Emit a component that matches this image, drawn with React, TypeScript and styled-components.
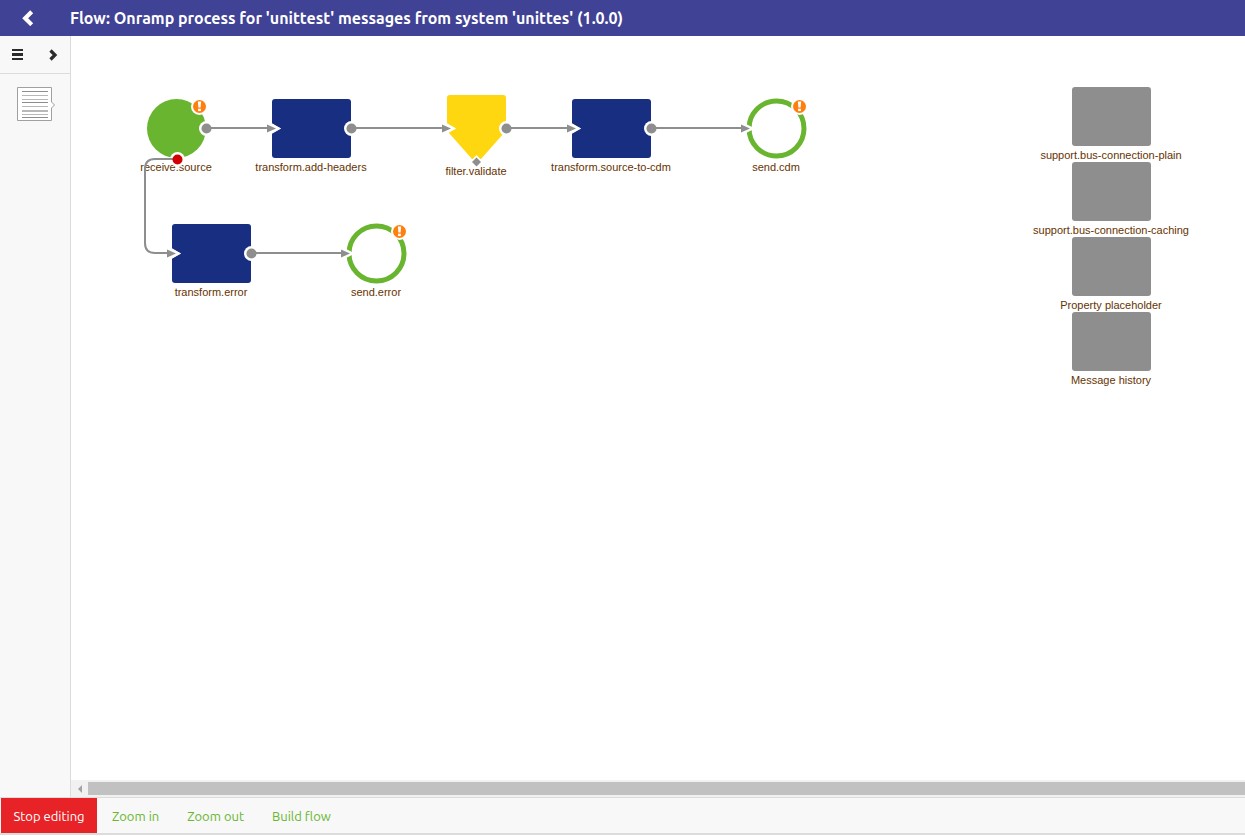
import React from 'react';
import styled, { createGlobalStyle } from 'styled-components';

const Global = createGlobalStyle`
  * { box-sizing: border-box; }
  body { margin: 0; background: #fff; font-family: Ubuntu, "Noto Sans", sans-serif; }
  button { border: 0; padding: 0; margin: 0; background: none; font: inherit; cursor: pointer; }
`;

const Page = styled.div`
  display: flex;
  flex-direction: column;
  height: 100vh;
  min-height: 480px;
  padding-bottom: 1px;
`;

const Header = styled.header`
  display: flex;
  align-items: center;
  flex: none;
  height: 36px;
  background: #404295;
  color: #fff;
`;

const BackButton = styled.button`
  display: flex;
  align-items: center;
  justify-content: center;
  width: 56px;
  height: 36px;
`;

const Title = styled.h1`
  margin: 0 0 0 14px;
  font-size: 16px;
  line-height: 20px;
  font-weight: 700;
  white-space: nowrap;
`;

const Body = styled.div`
  display: flex;
  flex: 1;
  min-height: 0;
`;

const Sidebar = styled.aside`
  flex: none;
  width: 71px;
  background: #f8f8f8;
  border-right: 1px solid #dcdcdc;
`;

const SideTools = styled.div`
  display: flex;
  height: 38px;
  border-bottom: 1px solid #dcdcdc;
`;

const SideButton = styled.button`
  display: flex;
  align-items: center;
  justify-content: center;
  width: 35px;
  height: 37px;
`;

const PaletteButton = styled.button`
  display: flex;
  padding: 12px 16px;
`;

const Main = styled.main`
  display: flex;
  flex-direction: column;
  flex: 1;
  min-width: 0;
`;

const Canvas = styled.div`
  position: relative;
  flex: 1;
  min-height: 0;
  overflow: hidden;
`;

const Wires = styled.svg`
  position: absolute;
  top: 0;
  left: 0;
  pointer-events: none;
`;

const Node = styled.div<{ $x: number; $y: number; $w: number }>`
  position: absolute;
  left: ${p => p.$x}px;
  top: ${p => p.$y}px;
  width: ${p => p.$w}px;
  display: flex;
  flex-direction: column;
  align-items: center;
`;

const Shape = styled.svg`
  display: block;
  flex: none;
  overflow: visible;
`;

const NodeLabel = styled.span`
  margin-top: 2px;
  font: 11px/13px "Liberation Sans", Arial, sans-serif;
  color: #663300;
  white-space: nowrap;
`;

const ScrollTrack = styled.div`
  display: flex;
  align-items: center;
  flex: none;
  height: 17px;
  background: #f1f1f1;
`;

const ScrollArrow = styled.button`
  display: flex;
  align-items: center;
  justify-content: center;
  width: 17px;
  height: 17px;
`;

const ScrollThumb = styled.div`
  flex: 1;
  height: 13px;
  background: #c1c1c1;
`;

const Footer = styled.footer`
  display: flex;
  flex: none;
  height: 38px;
  padding-left: 1px;
  background: #f8f8f8;
  border-top: 1px solid #dcdcdc;
  border-bottom: 2px solid #dcdcdc;
`;

const PrimaryAction = styled.button`
  min-width: 96px;
  padding: 0 12px;
  font-size: 13px;
  line-height: 18px;
  white-space: nowrap;
  color: #fff;
  background: #e82327;
`;

const Actions = styled.nav`
  display: flex;
  gap: 28px;
  padding-left: 15px;
`;

const Action = styled.button`
  font-size: 13px;
  line-height: 18px;
  white-space: nowrap;
  color: #68b631;
`;

type Kind = 'receive' | 'transform' | 'filter' | 'send' | 'support';
interface FlowNode { kind: Kind; label: string; x: number; y: number }

const nodes: FlowNode[] = [
  { kind: 'receive', label: 'receive.source', x: 75, y: 62 },
  { kind: 'transform', label: 'transform.add-headers', x: 200, y: 62 },
  { kind: 'filter', label: 'filter.validate', x: 375, y: 58 },
  { kind: 'transform', label: 'transform.source-to-cdm', x: 500, y: 62 },
  { kind: 'send', label: 'send.cdm', x: 675, y: 62 },
  { kind: 'transform', label: 'transform.error', x: 100, y: 187 },
  { kind: 'send', label: 'send.error', x: 275, y: 187 },
  { kind: 'support', label: 'support.bus-connection-plain', x: 1000, y: 50 },
  { kind: 'support', label: 'support.bus-connection-caching', x: 1000, y: 125 },
  { kind: 'support', label: 'Property placeholder', x: 1000, y: 200 },
  { kind: 'support', label: 'Message history', x: 1000, y: 275 },
];

const size: Record<Kind, [number, number]> = {
  receive: [60, 61],
  transform: [80, 61],
  filter: [60, 69],
  send: [60, 61],
  support: [80, 61],
};

function NodeShape({ kind }: { kind: Kind }) {
  const [w, h] = size[kind];
  return (
    <Shape width={w} height={h} viewBox={`0 0 ${w} ${h}`} aria-hidden="true">
      {kind === 'receive' && <circle cx="30.5" cy="30.5" r="29.5" fill="#69b52f" />}
      {kind === 'send' && <circle cx="30.5" cy="30.5" r="27.5" fill="#fff" stroke="#69b52f" strokeWidth="5" />}
      {kind === 'transform' && <rect x="1" y="1" width="79" height="59" rx="3" fill="#182e80" />}
      {kind === 'support' && <rect x="1" y="1" width="79" height="59" rx="3" fill="#8e8e8e" />}
      {kind === 'filter' && (
        <path d="M4 1H57Q60 1 60 4V35Q60 37 58 39L35 65H26L3 39Q1 37 1 35V4Q1 1 4 1Z" fill="#ffd710" />
      )}
    </Shape>
  );
}

interface Port { x: number; y: number; fill: string }

const ports: Port[] = [
  { x: 135.5, y: 92.5, fill: '#8e8e8e' },
  { x: 280.5, y: 92.5, fill: '#8e8e8e' },
  { x: 435.5, y: 92.5, fill: '#8e8e8e' },
  { x: 580.5, y: 92.5, fill: '#8e8e8e' },
  { x: 180.5, y: 217.5, fill: '#8e8e8e' },
  { x: 106.5, y: 123.5, fill: '#d20000' },
];

const Arrow = ({ x, y }: { x: number; y: number }) => (
  <g>
    <path d={`M${x - 1} ${y - 5}L${x + 9} ${y}L${x - 1} ${y + 5}Z`} fill="#fff" />
    <path d={`M${x - 5} ${y - 4}L${x + 4} ${y}L${x - 5} ${y + 4}Z`} fill="#8e8e8e" />
  </g>
);

const Warning = ({ x, y }: { x: number; y: number }) => (
  <g>
    <circle cx={x} cy={y} r="8.5" fill="#fff" />
    <circle cx={x} cy={y} r="6.5" fill="#ff7f0e" />
    <path d={`M${x - 1.6} ${y - 5}h3.2l-.5 6h-2.200z`} fill="#fff" />
    <rect x={x - 1.4} y={y + 2.2} width="2.8" height="2.4" fill="#fff" />
  </g>
);

export default function App() {
  return (
    <>
      <Global />
      <Page>
        <Header>
          <BackButton aria-label="Back">
            <svg width="12" height="16" viewBox="0 0 12 16" aria-hidden="true">
              <path d="M9.700 1.700L3.200 8.200L9.700 14.700" fill="none" stroke="#fff" strokeWidth="4.200" />
            </svg>
          </BackButton>
          <Title>Flow: Onramp process for 'unittest' messages from system 'unittes' (1.0.0)</Title>
        </Header>
        <Body>
          <Sidebar>
            <SideTools>
              <SideButton aria-label="Menu">
                <svg width="11" height="11" viewBox="0 0 11 11" fill="#2b2b2b" aria-hidden="true">
                  <path d="M0 0H11V2H0ZM0 4H11V7H0ZM0 9H11V11H0Z" />
                </svg>
              </SideButton>
              <SideButton aria-label="Expand">
                <svg width="10" height="12" viewBox="0 0 10 12" aria-hidden="true">
                  <path d="M2.500 1.500L7 6L2.500 10.500" fill="none" stroke="#2b2b2b" strokeWidth="3.200" />
                </svg>
              </SideButton>
            </SideTools>
            <PaletteButton aria-label="Components">
              <svg width="40" height="37" viewBox="0 0 40 37" fill="none" aria-hidden="true">
                <path d="M1.5 1.5H35.5V16L38.500 19L35.5 22V34.5H1.5Z" fill="#fff" stroke="#a0a0a0" />
                <path d="M6 5.5H32M6 16.5H32M6 31.5H32" stroke="#8e8e8e" />
                <path d="M6 9.5H32M6 13.5H32M6 20.5H32M6 24.5H32M6 25.5H32M6 28.5H32" stroke="#b8b8b8" />
              </svg>
            </PaletteButton>
          </Sidebar>
          <Main>
            <Canvas>
              {nodes.map(n => (
                <Node key={n.label} $x={n.x} $y={n.y} $w={size[n.kind][0]}>
                  <NodeShape kind={n.kind} />
                  <NodeLabel>{n.label}</NodeLabel>
                </Node>
              ))}
              <Wires width="1174" height="400" viewBox="0 0 1174 400" aria-hidden="true">
                {ports.map(p => (
                  <circle key={`${p.x}-${p.y}`} cx={p.x} cy={p.y} r="7.5" fill="#fff" />
                ))}
                <path d="M198 85.500L210 92.500L198 99.500Z" fill="#fff" />
                <path d="M373 85.500L385 92.500L373 99.500Z" fill="#fff" />
                <path d="M498 85.500L510 92.500L498 99.500Z" fill="#fff" />
                <path d="M98 210.500L110 217.500L98 224.500Z" fill="#fff" />
                <Arrow x={201} y={92.5} />
                <Arrow x={376} y={92.5} />
                <Arrow x={501} y={92.5} />
                <Arrow x={675} y={92.5} />
                <Arrow x={101} y={217.5} />
                <Arrow x={275} y={217.5} />
                <g fill="none" stroke="#8e8e8e" strokeWidth="2">
                  <path d="M135 92H198M280 92H373M435 92H498M580 92H672M180 217H272" />
                  <path d="M106 123H84Q74 123 74 133V207Q74 217 84 217H98" />
                </g>
                {ports.map(p => (
                  <circle key={`${p.x}-${p.y}`} cx={p.x} cy={p.y} r="5" fill={p.fill} />
                ))}
                <path d="M405.5 119L412 126L405.5 131L399 126Z" fill="#fff" />
                <path d="M405.5 121.500L410 126L405.5 130.500L401 126Z" fill="#8e8e8e" />
                <Warning x={128.5} y={70.5} />
                <Warning x={728.5} y={70.5} />
                <Warning x={328.5} y={195.5} />
              </Wires>
            </Canvas>
            <ScrollTrack>
              <ScrollArrow aria-label="Scroll left">
                <svg width="4" height="8" viewBox="0 0 4 8" fill="#a3a3a3" aria-hidden="true">
                  <path d="M4 0V8L0 4Z" />
                </svg>
              </ScrollArrow>
              <ScrollThumb />
            </ScrollTrack>
          </Main>
        </Body>
        <Footer>
          <PrimaryAction>Stop editing</PrimaryAction>
          <Actions>
            <Action>Zoom in</Action>
            <Action>Zoom out</Action>
            <Action>Build flow</Action>
          </Actions>
        </Footer>
      </Page>
    </>
  );
}
